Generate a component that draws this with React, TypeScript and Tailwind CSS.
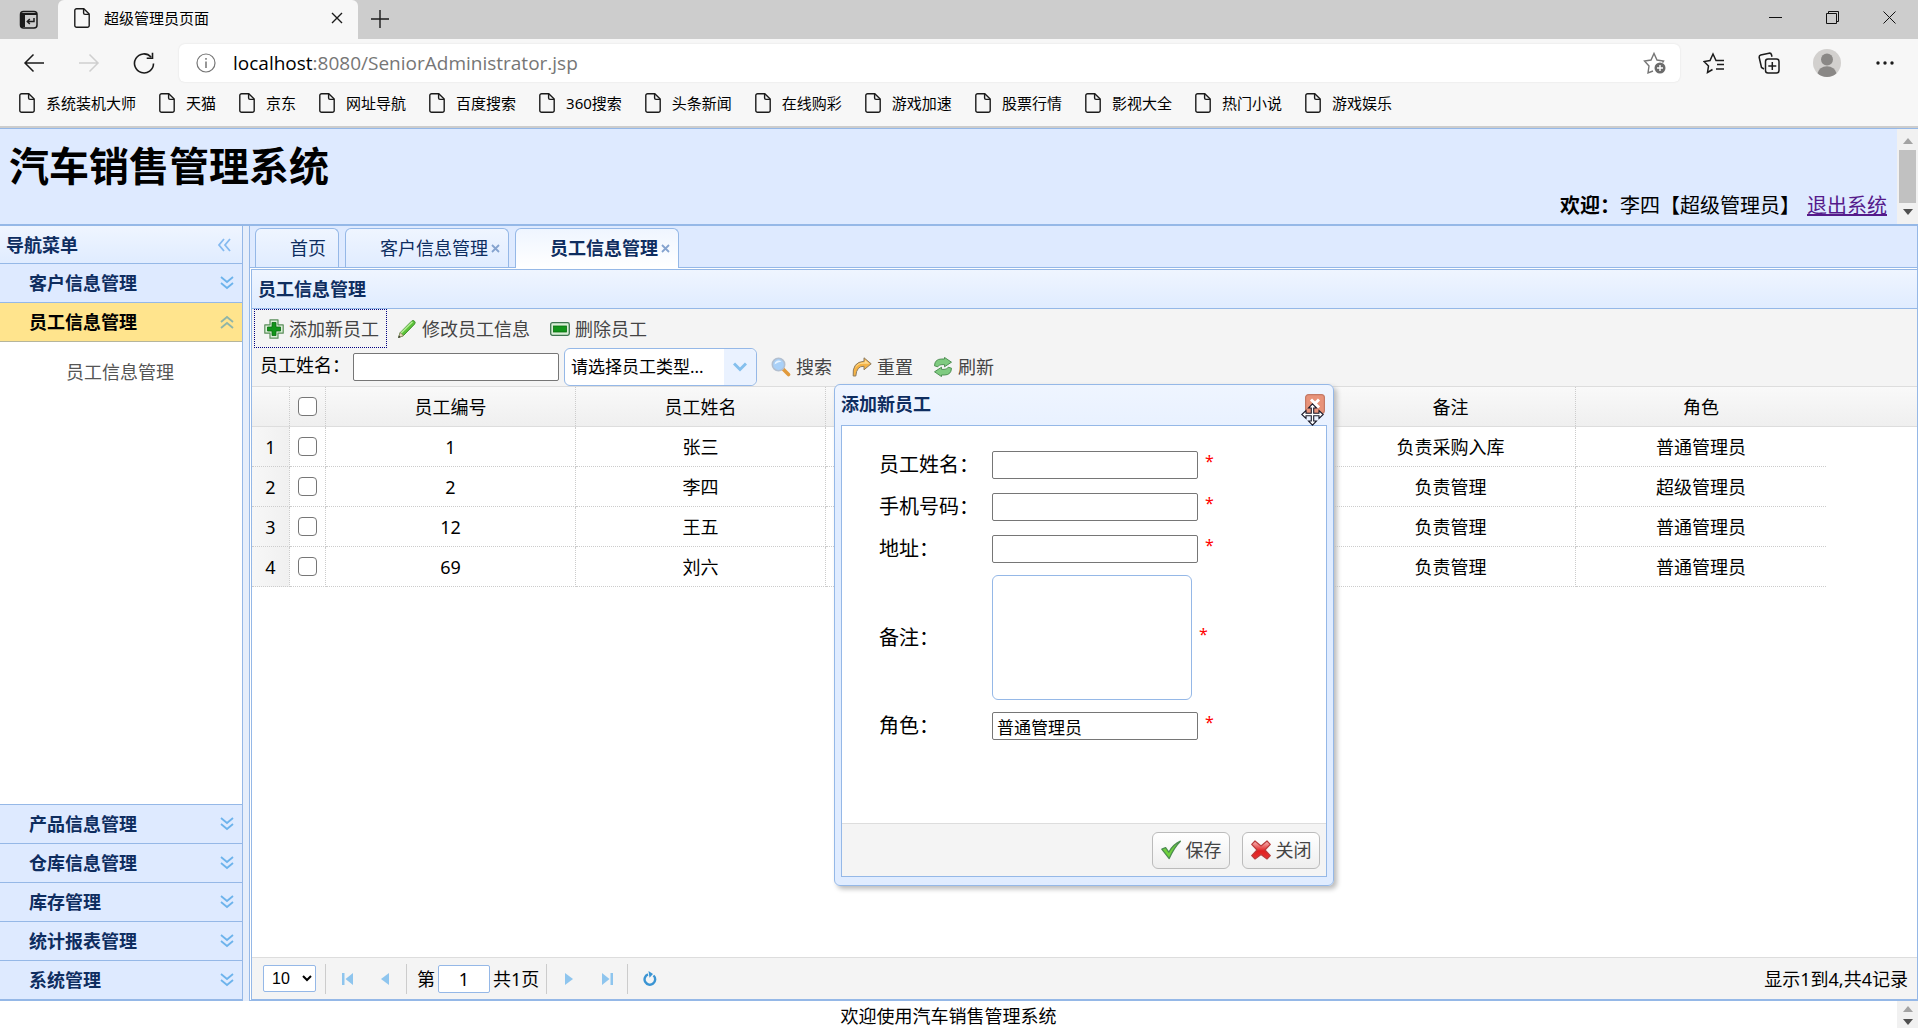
import React from "react";

const bookmarks = ["系统装机大师", "天猫", "京东", "网址导航", "百度搜索", "360搜索", "头条新闻", "在线购彩", "游戏加速", "股票行情", "影视大全", "热门小说", "游戏娱乐"];

const rows = [
  { id: "1", name: "张三", note: "负责采购入库", role: "普通管理员" },
  { id: "2", name: "李四", note: "负责管理", role: "超级管理员" },
  { id: "12", name: "王五", note: "负责管理", role: "普通管理员" },
  { id: "69", name: "刘六", note: "负责管理", role: "普通管理员" },
];

const DocIcon = () => (
  <svg className="h-5 w-4 shrink-0" viewBox="0 0 16 20" fill="none" stroke="#1b1b1b" strokeWidth="1.4">
    <path d="M3 .8h6.8L15.2 6v11.4a1.8 1.8 0 0 1-1.8 1.8H2.6a1.8 1.8 0 0 1-1.8-1.8V2.6A1.8 1.8 0 0 1 2.6.8z" />
    <path d="M9.6 1v4a1.4 1.4 0 0 0 1.4 1.4h4" />
  </svg>
);

const Chevrons = ({ up = false }: { up?: boolean }) => (
  <svg className="h-4 w-4" viewBox="0 0 16 16" fill="none" stroke={up ? "#8fb5a8" : "#6db3ec"} strokeWidth="1.8">
    {up ? <path d="M2 8l6-5 6 5M2 14l6-5 6 5" /> : <path d="M2 2l6 5 6-5M2 8l6 5 6-5" />}
  </svg>
);

const AddIcon = () => (
  <svg className="h-5 w-5" viewBox="0 0 20 20">
    <path d="M6 .8h8v5h5.2v8.4H14v5H6v-5H.8V5.800H6z" fill="#dcefd9" stroke="#5c8f5c" strokeWidth="1.2" strokeLinejoin="round" />
    <path d="M8 3.500h4V8h4.500v4H12v4.500H8V12H3.500V8H8z" fill="#12941a" stroke="#0a6d10" strokeWidth=".8" />
  </svg>
);
const PencilIcon = () => (
  <svg className="h-5 w-5" viewBox="0 0 20 20">
    <path d="M1.500 18.500l1.800-5L14.500 2.200q1.600-1.400 3 0t0 3L6.300 16.700z" fill="#5cc23a" stroke="#3f8f2c" strokeWidth="1" />
    <path d="M4 14L15.500 2.800" stroke="#b5ee94" strokeWidth="1.500" />
    <path d="M1.500 18.500l1.800-5 3 3.200z" fill="#e9dcbc" stroke="#8d8163" strokeWidth=".8" />
    <path d="M1.200 18.900l.9-2.300 1.400 1.400z" fill="#333" />
  </svg>
);
const RemoveIcon = () => (
  <svg className="h-5 w-5" viewBox="0 0 20 20">
    <rect x=".7" y="3.700" width="18.600" height="12.600" rx="1.800" fill="#d9efd6" stroke="#3f7350" strokeWidth="1.300" />
    <rect x="3.500" y="7" width="13" height="6" fill="#12941a" stroke="#0a6d10" strokeWidth=".8" />
  </svg>
);
const SearchIcon = () => (
  <svg className="h-5 w-5" viewBox="0 0 20 20">
    <path d="M11.500 11.500l6 6" stroke="#e19a3c" strokeWidth="3.600" strokeLinecap="round" />
    <circle cx="7.500" cy="7.500" r="6.200" fill="#a9d0f7" stroke="#b2bfd0" strokeWidth="1.600" />
    <path d="M3.500 7.500a4.200 4.200 0 0 1 7-3Q7 5 3.500 7.500z" fill="#e8f4ff" />
  </svg>
);
const ResetIcon = () => (
  <svg className="h-5 w-5" viewBox="0 0 20 20">
    <path d="M12 .8l7.200 6-7.200 6V9.300Q4.600 8.800 3.800 19H1.200Q-.2 5.200 12 4.200z" fill="#f5b345" stroke="#8d7c61" strokeWidth="1" strokeLinejoin="round" />
    <path d="M13 3l4.500 3.700H12Q5 6.500 3 12 4 5.500 13 5.300z" fill="#fddb92" />
  </svg>
);
const RefreshIcon = () => (
  <svg className="h-5 w-5" viewBox="0 0 20 20" fill="#7fcb80" stroke="#46894b" strokeWidth=".9" strokeLinejoin="round">
    <path d="M1.500 8.800Q1.800 2 8.500 2h3V.4L18.500 5.200l-7 4.600V7.600H9Q5.800 7.500 4.800 9.800z" />
    <path d="M18.500 11.200Q18.200 18 11.500 18h-3v1.600L1.500 14.800l7-4.600v2.200H11q3.200.1 4.200-2.200z" />
  </svg>
);
const OkIcon = () => (
  <svg className="h-5 w-5" viewBox="0 0 20 20">
    <path d="M.8 9.200l3.800-1.500 3.200 4.500Q12 4.500 19.400 1.200 13 7.500 8.200 18.600z" fill="#6fd23c" stroke="#4c8c51" strokeWidth="1.300" strokeLinejoin="round" />
  </svg>
);
const CancelIcon = () => (
  <svg className="h-5 w-5" viewBox="0 0 20 20">
    <defs>
      <linearGradient id="red" x1="0" y1="0" x2="0" y2="1">
        <stop offset="0.100" stopColor="#f5a3a3" />
        <stop offset="0.550" stopColor="#e01f1f" />
        <stop offset="1" stopColor="#e83434" />
      </linearGradient>
    </defs>
    <path d="M4 1l6 5 6-5 3.300 3.300L14 10l5.300 5.700L16 19l-6-4.500L4 19 .7 15.700 6 10 .7 4.300z" fill="url(#red)" stroke="#b93c3c" strokeWidth="1.200" strokeLinejoin="round" />
  </svg>
);

const ToolButton = ({ icon, text, focus = false }: { icon: React.ReactNode; text: string; focus?: boolean }) => (
  <button
    type="button"
    className={
      focus
        ? "flex h-[39px] shrink-0 items-center gap-[5px] border border-dotted border-[#000080] pr-[7px] pl-[9px] text-[#444]"
        : "flex h-[39px] shrink-0 items-center gap-[5px] px-[10px] text-[#444]"
    }
  >
    {icon}
    {text}
  </button>
);

const NavItem = ({ text, open = false }: { text: string; open?: boolean }) => (
  <button
    type="button"
    className={
      open
        ? "flex h-[39px] w-full shrink-0 items-center justify-between border-b border-[#b5b59c] bg-[#ffe48d] pr-[7px] pl-[29px] font-bold text-black"
        : "flex h-[39px] w-full shrink-0 items-center justify-between border-b border-[#95b8e7] bg-[#deeaff] pr-[7px] pl-[29px] font-bold text-[#0e2d5f]"
    }
  >
    {text}
    <Chevrons up={open} />
  </button>
);

const Tab = ({ text, active = false, closable = true }: { text: string; active?: boolean; closable?: boolean }) => (
  <div
    className={
      active
        ? "-mb-px flex h-10 items-center rounded-t-md border border-b-0 border-[#95b8e7] bg-linear-to-b from-[#eff5ff] to-white pr-2 pb-px pl-[34px] font-bold text-[#0e2d5f]"
        : "flex h-[39px] items-center rounded-t-md border border-b-0 border-[#95b8e7] bg-linear-to-b from-[#eff5ff] to-[#e0ecff] pr-2 pl-[34px] text-[#0e2d5f]"
    }
  >
    <button type="button" className={closable ? "" : "pr-1"}>{text}</button>
    {closable && (
      <button type="button" aria-label={"关闭" + text} className="ml-[3px]">
        <svg className="h-[9px] w-[9px]" viewBox="0 0 9 9" stroke="#85a3cf" strokeWidth="1.800">
          <path d="M1 1l7 7M8 1l-7 7" />
        </svg>
      </button>
    )}
  </div>
);

const Field = ({ id, label, value = "" }: { id: string; label: string; value?: string }) => (
  <div className="flex h-[42px] items-center">
    <label htmlFor={id} className="w-[113px] text-xl">{label}</label>
    <input id={id} defaultValue={value} className="h-7 w-[206px] rounded-xs border border-[#767676] bg-white px-1 text-[17px] leading-5" />
    <span className="mb-2 ml-[7px] text-base leading-5 text-[#f00]">*</span>
  </div>
);

const ScrollArrow = ({ down = false }: { down?: boolean }) => (
  <svg className="h-[6px] w-[10px]" viewBox="0 0 10 6">
    {down ? <path d="M0 0h10L5 6z" fill="#505050" /> : <path d="M0 6h10L5 0z" fill="#a3a3a3" />}
  </svg>
);

const PageButton = ({ label, children }: { label: string; children: React.ReactNode }) => (
  <button type="button" aria-label={label} className="flex h-8 w-[38px] items-center justify-center">{children}</button>
);

const cell = "border-r border-b border-dotted border-[#ccc] p-0 text-center";
const head = "border-r border-dotted border-[#ccc] p-0 text-center font-normal";
const check = "block mx-auto h-[19px] w-[19px] appearance-none rounded-[4px] border border-[#767676] bg-white";

export default function App() {
  return (
    <div className="relative flex h-screen flex-col overflow-hidden bg-white font-['Noto_Sans','Noto_Sans_CJK_SC',sans-serif] text-lg leading-6 text-black">
      {/* Browser tabs */}
      <div className="flex h-[39px] shrink-0 items-stretch bg-[#cdcdcd]">
        <button type="button" aria-label="标签页操作" className="flex w-[58px] items-center justify-center rounded-br-md">
          <svg className="h-5 w-5" viewBox="0 0 20 20" fill="none" stroke="#1b1b1b" strokeWidth="1.500">
            <rect x="1.500" y="1.500" width="16.500" height="16.500" rx="3" />
            <path d="M2 4h16" strokeWidth="2" />
            <path d="M4 3v14" strokeWidth="4" />
            <path d="M15 8v3.500H8.500M10.800 9l-2.500 2.500 2.500 2.500" />
          </svg>
        </button>
        <div className="flex w-[300px] items-center rounded-t-md bg-[#f7f7f7] pr-[15px] pb-1 pl-4">
          <DocIcon />
          <span className="ml-[14px] flex-1 text-[15px]">超级管理员页面</span>
          <button type="button" aria-label="关闭标签页">
            <svg className="h-3 w-3" viewBox="0 0 12 12" stroke="#1b1b1b" strokeWidth="1.400"><path d="M1 1l10 10M11 1L1 11" /></svg>
          </button>
        </div>
        <button type="button" aria-label="新建标签页" className="flex w-[44px] items-center justify-center pb-[2px]">
          <svg className="h-[18px] w-[18px]" viewBox="0 0 18 18" stroke="#1b1b1b" strokeWidth="1.400"><path d="M9 0v18M0 9h18" /></svg>
        </button>
        <div className="flex-1" />
        <div className="flex items-center pb-1">
          <button type="button" aria-label="最小化" className="flex w-[57px] justify-center">
            <svg className="h-[13px] w-[13px]" viewBox="0 0 13 13" stroke="#111"><path d="M0 6.500h13" /></svg>
          </button>
          <button type="button" aria-label="还原" className="flex w-[57px] justify-center">
            <svg className="h-[13px] w-[13px]" viewBox="0 0 13 13" stroke="#111" fill="none"><path d="M.5 2.500h10v10H.5zM2.500 2.500v-2h10v10h-2" /></svg>
          </button>
          <button type="button" aria-label="关闭窗口" className="flex w-[57px] justify-center">
            <svg className="h-[13px] w-[13px]" viewBox="0 0 13 13" stroke="#111"><path d="M.5.5l12 12M12.500.5l-12 12" /></svg>
          </button>
        </div>
      </div>

      {/* Address bar */}
      <div className="flex h-[49px] shrink-0 items-center bg-[#f7f7f7] pr-[22px] pb-[2px] pl-[23px]">
        <button type="button" aria-label="后退">
          <svg className="h-[22px] w-[22px]" viewBox="0 0 22 22" fill="none" stroke="#1b1b1b" strokeWidth="1.500"><path d="M21 11H2M10.500 2.500L2 11l8.500 8.500" /></svg>
        </button>
        <button type="button" aria-label="前进" className="ml-[33px]">
          <svg className="h-[22px] w-[22px]" viewBox="0 0 22 22" fill="none" stroke="#cfcfcf" strokeWidth="1.500"><path d="M1 11h19M11.500 2.500L20 11l-8.500 8.500" /></svg>
        </button>
        <button type="button" aria-label="刷新页面" className="ml-[33px]">
          <svg className="h-[22px] w-[22px]" viewBox="0 0 22 22" fill="none" stroke="#1b1b1b" strokeWidth="1.600"><path d="M20.500 11.500A9.500 9.500 0 1 1 18 5M19.500.8v5.400h-5.800" /></svg>
        </button>
        <div className="ml-[24px] flex h-[38px] flex-1 items-center rounded-md bg-white pr-[13px] pl-[17px] shadow-[0_0_2px_#ddd]">
          <svg className="h-5 w-5" viewBox="0 0 20 20" fill="none" stroke="#767676" strokeWidth="1.200"><circle cx="10" cy="10" r="9" /><path d="M10 8.500V15M10 5v1.800" strokeWidth="1.500" /></svg>
          <span className="ml-[17px] flex-1 font-['Open_Sans',sans-serif] text-[19px] text-[#767676]">
            <span className="text-black">localhost</span>:8080/SeniorAdministrator.jsp
          </span>
          <svg className="h-6 w-6" viewBox="0 0 24 24" fill="none" stroke="#767676" strokeWidth="1.400">
            <path d="M10 20l-5 2 1-7-4.500-5 6.500-1L11 2.500 14 9l6.500 1-1 1.500" />
            <circle cx="17" cy="17" r="5.500" fill="#6b6b6b" stroke="none" />
            <path d="M17 14v6M14 17h6" stroke="#fff" />
          </svg>
        </div>
        <button type="button" aria-label="收藏夹" className="ml-[23px]">
          <svg className="h-[22px] w-[22px]" viewBox="0 0 22 22" fill="none" stroke="#1b1b1b" strokeWidth="1.500">
            <path d="M9.500 17.500L4.500 20.500l1-6.500L1 9.500l6-1L10 2l3 6.500h8M14 12.500h7M13 17h8" />
          </svg>
        </button>
        <button type="button" aria-label="集锦" className="ml-[33px]">
          <svg className="h-[22px] w-[22px]" viewBox="0 0 22 22" fill="none" stroke="#1b1b1b" strokeWidth="1.500">
            <rect x="7.500" y="7" width="13.500" height="14" rx="2.500" />
            <path d="M14.300 10v8M10.300 14h8M6 17L3.500 15.500 1.200 5.500q-.3-2 1.500-2.500L11 1.200q2-.4 2.500 1.500l.5 2" />
          </svg>
        </button>
        <button type="button" aria-label="用户" className="ml-[33px]">
          <svg className="h-7 w-7" viewBox="0 0 28 28">
            <circle cx="14" cy="14" r="14" fill="#d2d0ce" />
            <circle cx="14" cy="10.500" r="6" fill="#8a8886" />
            <path d="M4.500 24.200a9.600 8 0 0 1 19 0 14 14 0 0 1-19 0z" fill="#8a8886" />
          </svg>
        </button>
        <button type="button" aria-label="更多" className="ml-[33px]">
          <svg className="h-[22px] w-[22px]" viewBox="0 0 22 22" fill="#1b1b1b"><circle cx="4" cy="11" r="1.700" /><circle cx="11" cy="11" r="1.700" /><circle cx="18" cy="11" r="1.700" /></svg>
        </button>
      </div>

      {/* Bookmarks */}
      <nav className="flex h-[40px] shrink-0 items-center gap-[23px] border-b-2 border-[#cdcdcd] bg-[#f7f7f7] pb-2 pl-[19px] text-[15px] whitespace-nowrap">
        {bookmarks.map((b) => (
          <a key={b} href="#" className="flex items-center gap-[11px]"><DocIcon />{b}</a>
        ))}
      </nav>

      {/* Page banner */}
      <header className="flex h-[98px] shrink-0 border-t border-b-2 border-[#95b8e7] bg-[#deeaff]">
        <div className="flex flex-1 flex-col justify-between pr-[10px] pb-1 pl-[9px]">
          <h1 className="mt-2 text-[40px] leading-[58px] font-bold">汽车销售管理系统</h1>
          <p className="-mt-2 text-right text-xl leading-7"><b>欢迎：</b>李四【超级管理员】<a href="#" className="ml-[7px] text-[#551a8b] underline">退出系统</a></p>
        </div>
        <div className="flex w-[21px] flex-col items-center justify-between bg-[#f1f1f1] py-[9px]">
          <ScrollArrow />
          <div className="h-[53px] w-[17px] bg-[#c1c1c1]" />
          <ScrollArrow down />
        </div>
      </header>

      <div className="flex min-h-0 flex-1 gap-[6px] bg-[#e6eefb]">
        {/* Navigation */}
        <aside className="flex w-[243px] shrink-0 flex-col border-r border-b border-[#95b8e7] bg-white">
          <div className="flex h-[38px] shrink-0 items-center justify-between border-b border-[#95b8e7] bg-linear-to-b from-[#eff5ff] to-[#e0ecff] pr-[10px] pl-[6px] font-bold text-[#0e2d5f]">
            导航菜单
            <button type="button" aria-label="折叠菜单">
              <svg className="h-4 w-4" viewBox="0 0 16 16" fill="none" stroke="#85baf0" strokeWidth="1.800"><path d="M8 2L3 8l5 6M14 2L9 8l5 6" /></svg>
            </button>
          </div>
          <NavItem text="客户信息管理" />
          <NavItem text="员工信息管理" open />
          <div className="flex-1 border-b border-[#95b8e7] pt-[18px] pl-[66px]">
            <a href="#" className="text-[#555]">员工信息管理</a>
          </div>
          <NavItem text="产品信息管理" />
          <NavItem text="仓库信息管理" />
          <NavItem text="库存管理" />
          <NavItem text="统计报表管理" />
          <NavItem text="系统管理" />
        </aside>

        {/* Workspace */}
        <main className="flex min-w-0 flex-1 flex-col border-x border-b border-[#95b8e7] bg-white">
          <div className="flex h-[42px] shrink-0 items-end gap-[6px] border-b border-[#95b8e7] bg-[#deeaff] pl-[5px]">
            <Tab text="首页" closable={false} />
            <Tab text="客户信息管理" />
            <Tab text="员工信息管理" active />
          </div>
          <div className="mt-px ml-px flex min-h-0 flex-1 flex-col border-t border-b border-l border-[#95b8e7]">
            <h2 className="flex h-[39px] shrink-0 items-center border-b border-[#95b8e7] bg-linear-to-b from-[#eff5ff] to-[#e0ecff] pl-[6px] font-bold text-[#0e2d5f]">员工信息管理</h2>
            <div className="shrink-0 border-b border-[#ddd] bg-[#f4f4f4] pl-[2px]">
              <div className="flex">
                <ToolButton icon={<AddIcon />} text="添加新员工" focus />
                <ToolButton icon={<PencilIcon />} text="修改员工信息" />
                <ToolButton icon={<RemoveIcon />} text="删除员工" />
              </div>
              <div className="flex h-[38px] items-center pl-[6px]">
                <label htmlFor="q" className="w-[93px] pb-1">员工姓名：</label>
                <input id="q" className="h-7 w-[206px] rounded-xs border border-[#767676] bg-white px-1" />
                <div className="relative mr-1 ml-[5px]">
                  <select aria-label="员工类型" className="h-[38px] w-[193px] appearance-none rounded-md border border-[#95b8e7] bg-white pl-[6px] text-[17px]">
                    <option>请选择员工类型...</option>
                  </select>
                  <div className="pointer-events-none absolute top-px right-px flex h-9 w-8 items-center justify-center rounded-r-md bg-[#eaf2ff]">
                    <svg className="h-[10px] w-[14px]" viewBox="0 0 14 10" fill="none" stroke="#85c0ee" strokeWidth="3"><path d="M1 1.500l6 6 6-6" /></svg>
                  </div>
                </div>
                <ToolButton icon={<SearchIcon />} text="搜索" />
                <ToolButton icon={<ResetIcon />} text="重置" />
                <ToolButton icon={<RefreshIcon />} text="刷新" />
              </div>
            </div>
            <div className="min-h-0 flex-1 overflow-hidden">
              <table className="w-full table-fixed border-separate border-spacing-0">
                <colgroup>
                  <col className="w-[38px]" />
                  <col className="w-9" />
                  <col className="w-[250px]" />
                  <col className="w-[250px]" />
                  <col className="w-[250px]" />
                  <col className="w-[250px]" />
                  <col className="w-[250px]" />
                  <col className="w-[250px]" />
                  <col />
                </colgroup>
                <thead>
                  <tr className="h-[39px] bg-linear-to-b from-[#f9f9f9] to-[#efefef]">
                    <th className={head} />
                    <th className={head}><input type="checkbox" aria-label="全选" className={check} /></th>
                    <th className={head}>员工编号</th>
                    <th className={head}>员工姓名</th>
                    <th className={head} />
                    <th className={head} />
                    <th className={head}>备注</th>
                    <th className="p-0 font-normal">角色</th>
                    <th className="p-0" />
                  </tr>
                </thead>
                <tbody>
                  <tr aria-hidden="true"><td colSpan={9} className="h-px bg-[#ddd] p-0" /></tr>
                  {rows.map((r, i) => (
                    <tr key={r.id} className="h-10">
                      <td className="border-r border-b border-dotted border-[#ccc] bg-linear-to-r from-[#f7f7f7] to-[#f0f0f0] p-0 text-center">{i + 1}</td>
                      <td className={cell}><input type="checkbox" aria-label={"选择" + r.name} className={check} /></td>
                      <td className={cell}>{r.id}</td>
                      <td className={cell}>{r.name}</td>
                      <td className={cell} />
                      <td className={cell} />
                      <td className={cell}>{r.note}</td>
                      <td className="border-b border-dotted border-[#ccc] p-0 text-center">{r.role}</td>
                      <td className="p-0" />
                    </tr>
                  ))}
                </tbody>
              </table>
            </div>
            <div className="flex h-[42px] shrink-0 items-center border-t border-[#ddd] bg-[#f4f4f4] pr-[9px] pl-[11px]">
              <select aria-label="每页条数" className="mr-[9px] h-[27px] w-[53px] rounded-xs border border-[#95b8e7] bg-white pl-1 font-['Liberation_Sans',sans-serif] text-base">
                <option>10</option>
              </select>
              <div className="mr-[2px] h-[30px] w-px bg-[#ccc]" />
              <PageButton label="首页">
                <svg className="h-3 w-[11px]" viewBox="0 0 11 12" fill="#8ec5ee"><path d="M0 0h2.500v12H0zM11 0v12L3.500 6z" /></svg>
              </PageButton>
              <PageButton label="上一页">
                <svg className="h-3 w-2" viewBox="0 0 8 12" fill="#8ec5ee"><path d="M8 0v12L0 6z" /></svg>
              </PageButton>
              <div className="mr-[10px] ml-[2px] h-[30px] w-px bg-[#ccc]" />
              <label htmlFor="page">第</label>
              <input id="page" defaultValue="1" className="mx-[3px] h-7 w-[52px] rounded-xs border border-[#95b8e7] bg-white text-center" />
              <span>共1页</span>
              <div className="mr-[3px] ml-[7px] h-[30px] w-px bg-[#ccc]" />
              <PageButton label="下一页">
                <svg className="h-3 w-2" viewBox="0 0 8 12" fill="#8ec5ee"><path d="M0 0v12l8-6z" /></svg>
              </PageButton>
              <PageButton label="末页">
                <svg className="h-3 w-[11px]" viewBox="0 0 11 12" fill="#8ec5ee"><path d="M11 0H8.500v12H11zM0 0v12l7.500-6z" /></svg>
              </PageButton>
              <div className="mr-[3px] ml-[1px] h-[30px] w-px bg-[#ccc]" />
              <PageButton label="刷新">
                <svg className="h-[15px] w-[14px]" viewBox="0 0 14 15" fill="none" stroke="#3a94d3" strokeWidth="2.400">
                  <path d="M10.500 4.500A5.300 5.300 0 1 1 5 3.400" />
                  <path d="M5.500 0l4.500 3-3.500 3.800z" fill="#3a94d3" stroke="none" />
                </svg>
              </PageButton>
              <span className="ml-auto">显示1到4,共4记录</span>
            </div>
          </div>
        </main>
      </div>

      {/* Footer */}
      <footer className="flex h-[27px] shrink-0 overflow-hidden bg-white">
        <p className="flex-1 pt-[3px] text-center">欢迎使用汽车销售管理系统</p>
        <div className="flex w-[21px] flex-col items-center gap-[7px] bg-[#f1f1f1] pt-[5px]">
          <ScrollArrow />
          <ScrollArrow down />
        </div>
      </footer>

      {/* Add employee dialog */}
      <section role="dialog" aria-label="添加新员工" className="absolute top-[384px] left-[834px] flex h-[502px] w-[500px] flex-col rounded-md border border-[#95b8e7] bg-linear-to-b from-[#eff5ff] to-[#e0ecff] to-20% px-[6px] pb-2 shadow-[3px_3px_5px_#bbb]">
        <div className="flex h-10 shrink-0 items-center justify-between pr-[2px] pb-[2px] font-bold text-[#0e2d5f]">
          添加新员工
          <button type="button" aria-label="关闭对话框" className="relative">
            <svg className="h-5 w-5" viewBox="0 0 20 20">
              <rect x=".6" y=".6" width="18.800" height="18.800" rx="3" fill="#e8937a" stroke="#c47a66" strokeWidth="1.200" />
              <path d="M6 5.500l8 8M14 5.500l-8 8" stroke="#fff" strokeWidth="3" />
            </svg>
            <svg className="absolute top-[9px] -left-1 h-[23px] w-[23px]" viewBox="0 0 23 23">
              <path d="M11.500.8l4 4.200h-2.800v5.300H18V7.500l4.200 4-4.200 4v-2.800h-5.300V18h2.800l-4 4.200-4-4.200h2.800v-5.300H5v2.800l-4.200-4 4.200-4v2.800h5.300V5H7.500z" fill="#fff" stroke="#1b1b2b" strokeWidth="1.100" />
            </svg>
          </button>
        </div>
        <form className="flex min-h-0 flex-1 flex-col border border-[#95b8e7] bg-white">
          <div className="flex-1 pt-[18px] pl-[37px]">
            <Field id="name" label="员工姓名：" />
            <Field id="phone" label="手机号码：" />
            <Field id="addr" label="地址：" />
            <div className="flex h-[135px] items-center">
              <label htmlFor="note" className="w-[113px] text-xl">备注：</label>
              <textarea id="note" className="h-[125px] w-[200px] resize-none rounded-md border border-[#95b8e7] p-1" />
              <span className="mb-2 ml-[7px] text-base leading-5 text-[#f00]">*</span>
            </div>
            <Field id="role" label="角色：" value="普通管理员" />
          </div>
          <div className="flex h-[53px] shrink-0 items-center justify-end gap-3 border-t border-[#ddd] bg-[#f4f4f4] pr-[6px]">
            <button type="button" className="flex h-[37px] w-[78px] items-center justify-center gap-[5px] rounded-md border border-[#bbb] bg-linear-to-b from-white to-[#eee] text-[#444]"><OkIcon />保存</button>
            <button type="button" className="flex h-[37px] w-[78px] items-center justify-center gap-[5px] rounded-md border border-[#bbb] bg-linear-to-b from-white to-[#eee] text-[#444]"><CancelIcon />关闭</button>
          </div>
        </form>
      </section>
    </div>
  );
}
